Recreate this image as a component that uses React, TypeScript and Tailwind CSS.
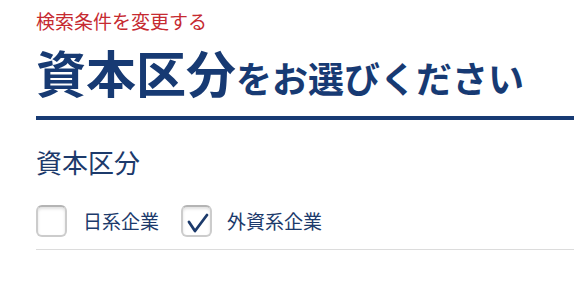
import React from "react";

const font = { fontFamily: '"Noto Sans CJK JP", "Noto Sans", sans-serif' };

function Box({ checked }: { checked?: boolean }) {
  return (
    <span className="relative block w-[31px] h-[32px] rounded-[6px] border-2 border-[#cccccc] border-t-[#b4b4b4] bg-white shadow-[inset_0_2px_3px_rgba(0,0,0,0.12)]">
      {checked && (
        <svg className="absolute left-[-2px] top-[-2px]" width="31" height="32" viewBox="0 0 31 32">
          <path d="M8 17 L14 26 L26 10" fill="none" stroke="#1c3a6b" strokeWidth="2.8" strokeLinecap="round" strokeLinejoin="round" />
        </svg>
      )}
    </span>
  );
}

export default function App() {
  return (
    <div className="w-[574px] h-[285px] bg-white overflow-hidden pl-[36px]" style={font}>
      <div className="pt-[8px] text-[19px] leading-[26px] text-[#c62a31]">検索条件を変更する</div>
      <h1 className="mt-[9px] flex items-baseline font-bold text-[#173a73] leading-[56px]">
        <span className="text-[50px]">資本区分</span>
        <span className="text-[36px]">をお選びください</span>
      </h1>
      <div className="mt-[11px] h-[4px] bg-[#173a73]"></div>
      <div className="mt-[26px] text-[26px] leading-[32px] text-[#1c3a6b]">資本区分</div>
      <div className="mt-[27px] flex items-center h-[32px]">
        <Box />
        <span className="ml-[16px] text-[19px] text-[#1c3a6b]">日系企業</span>
        <span className="ml-[22px]"><Box checked /></span>
        <span className="ml-[15px] text-[19px] text-[#1c3a6b]">外資系企業</span>
      </div>
      <div className="mt-[12px] h-px bg-[#dcdcdc]"></div>
    </div>
  );
}
